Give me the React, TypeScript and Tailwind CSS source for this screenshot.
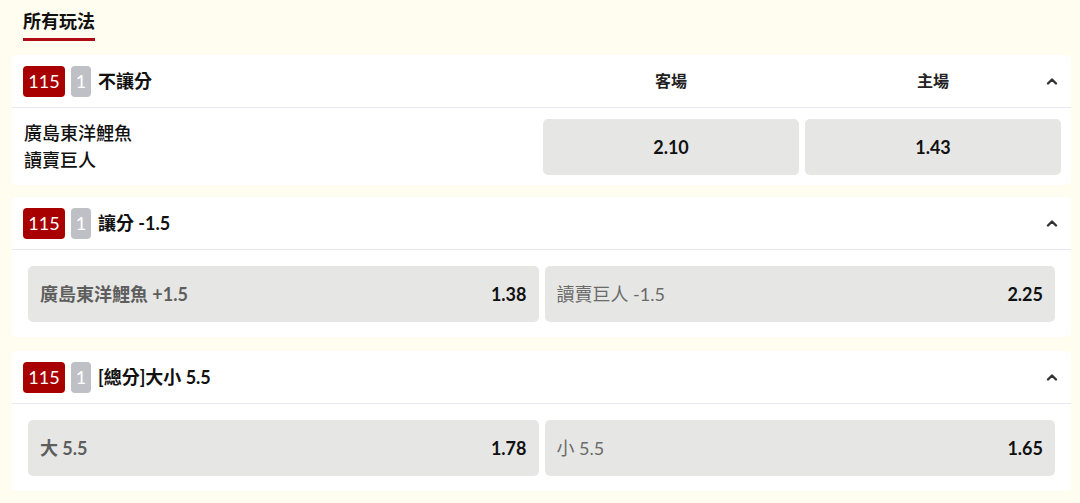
import React from "react";

const font = { fontFamily: 'Lato, "Noto Sans CJK TC", "Noto Sans", sans-serif' };

function Chevron() {
  return (
    <svg width="12" height="8" viewBox="0 0 12 8" className="absolute right-[13px] top-1/2 -translate-y-1/2">
      <path d="M2 6.5 L6 2.5 L10 6.5" fill="none" stroke="#333" strokeWidth="2.4" strokeLinecap="round" strokeLinejoin="round" />
    </svg>
  );
}

function Header({ label, cols }: { label: string; cols?: boolean }) {
  return (
    <div className="relative flex h-[53px] items-center border-b border-[#e9e9f3] pl-[11px] pr-[10px]">
      <div className="flex flex-1 items-center">
        <span className="flex h-[31px] w-[42px] items-center justify-center rounded-[4px] bg-[#a80000] text-[18px] leading-none text-white">115</span>
        <span className="ml-[6px] flex h-[31px] w-[20px] items-center justify-center rounded-[4px] bg-[#bfc0c5] text-[18px] leading-none text-white">1</span>
        <span className="ml-[7px] text-[18px] font-bold text-[#111]">{label}</span>
      </div>
      {cols && (
        <div className="flex gap-[6px]">
          <div className="w-[256px] text-center text-[16px] font-bold text-[#222]">客場</div>
          <div className="w-[256px] text-center text-[16px] font-bold text-[#222]">主場</div>
        </div>
      )}
      <Chevron />
    </div>
  );
}

function SideBtn({ label, odds, strong }: { label: string; odds: string; strong?: boolean }) {
  return (
    <div className="flex h-[56px] flex-1 items-center justify-between rounded-[5px] bg-[#e6e7e5] px-3">
      <span className={strong ? "text-[18px] font-bold text-[#5e5e5e]" : "text-[18px] font-normal text-[#6a6a6a]"}>{label}</span>
      <span className="text-[18px] font-bold text-[#111]">{odds}</span>
    </div>
  );
}

export default function App() {
  return (
    <div style={font} className="h-[503px] w-full bg-[#fffcf0] pl-[12px] pr-[9px] pt-[8px]">
      <div className="ml-[11px] inline-flex flex-col">
        <span className="text-[18px] font-semibold leading-[26px] text-[#111]">所有玩法</span>
        <span className="mt-[4px] h-[3px] w-full bg-[#b00a12]"></span>
      </div>

      <div className="mt-[14px] rounded-[5px] bg-white">
        <Header label="不讓分" cols />
        <div className="flex items-center pb-[10px] pl-[12px] pr-[10px] pt-[11px]">
          <div className="flex flex-1 flex-col text-[18px] font-medium leading-[27px] text-[#111]">
            <span>廣島東洋鯉魚</span>
            <span>讀賣巨人</span>
          </div>
          <div className="flex gap-[6px]">
            <div className="flex h-[56px] w-[256px] items-center justify-center rounded-[5px] bg-[#e6e7e5] text-[18px] font-bold text-[#111]">2.10</div>
            <div className="flex h-[56px] w-[256px] items-center justify-center rounded-[5px] bg-[#e6e7e5] text-[18px] font-bold text-[#111]">1.43</div>
          </div>
        </div>
      </div>

      <div className="mt-[12px] rounded-[5px] bg-white">
        <Header label="讓分 -1.5" />
        <div className="flex gap-[6px] px-[16px] pb-[15px] pt-[16px]">
          <SideBtn label="廣島東洋鯉魚 +1.5" odds="1.38" strong />
          <SideBtn label="讀賣巨人 -1.5" odds="2.25" />
        </div>
      </div>

      <div className="mt-[14px] rounded-[5px] bg-white">
        <Header label="[總分]大小 5.5" />
        <div className="flex gap-[6px] px-[16px] pb-[15px] pt-[16px]">
          <SideBtn label="大 5.5" odds="1.78" strong />
          <SideBtn label="小 5.5" odds="1.65" />
        </div>
      </div>
    </div>
  );
}
